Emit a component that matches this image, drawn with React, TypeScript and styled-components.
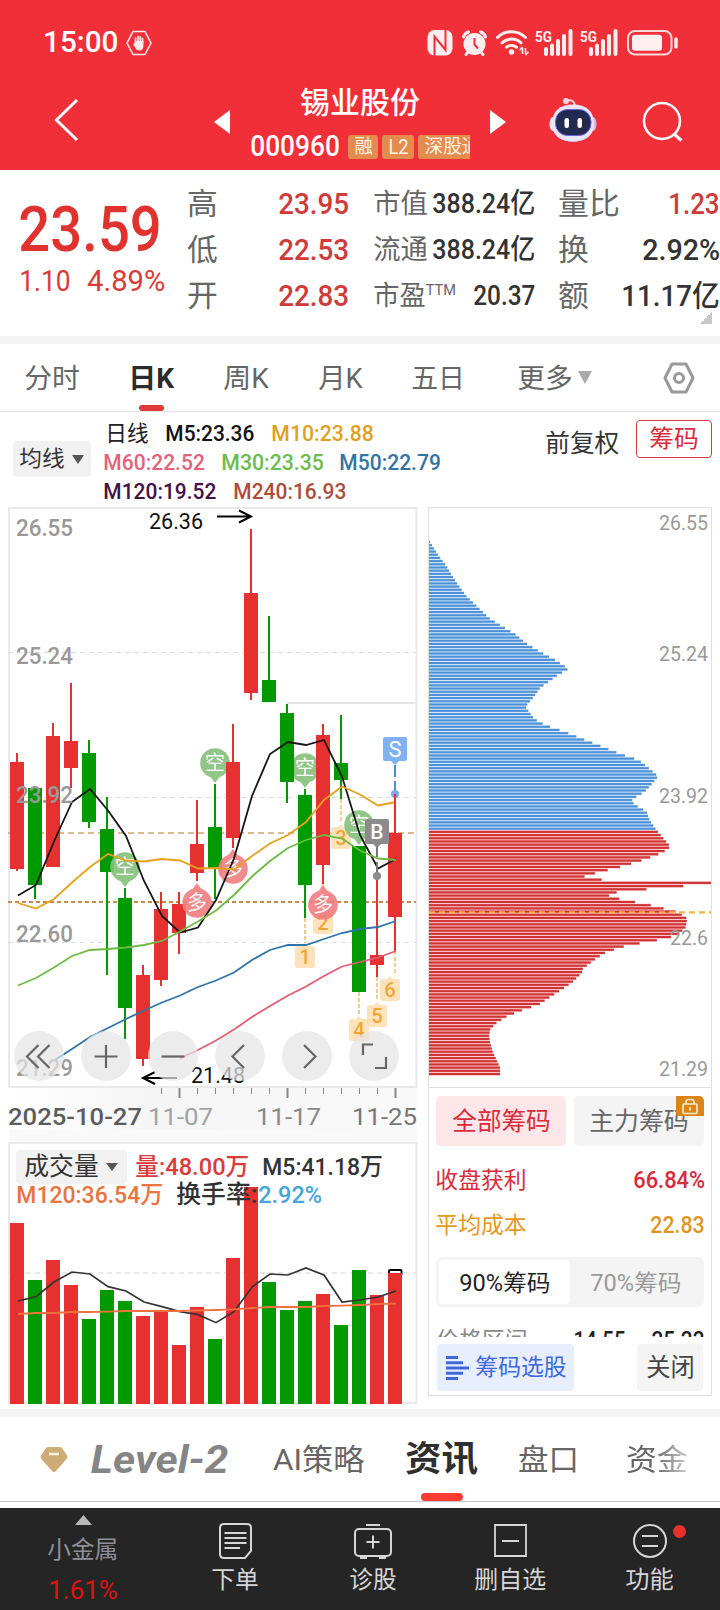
import React, { useLayoutEffect, useRef } from "react";
import styled, { createGlobalStyle } from "styled-components";

const FONT = 'Roboto, "Noto Sans CJK SC", sans-serif';

const Global = createGlobalStyle`
  * { box-sizing: border-box; }
  body { margin: 0; background: #fff; font-family: ${FONT}; color: #333; }
  svg { display: block; flex: none; }
`;

/* ---------- text that is condensed to a set width ---------- */

const FitBox = styled.span<{ $w: number; $ml?: number; $s: number; $c?: string; $b?: number; $i?: boolean }>`
  display: block;
  flex: none;
  width: ${(p) => p.$w}px;
  margin-left: ${(p) => p.$ml ?? 0}px;
  font-size: ${(p) => p.$s}px;
  line-height: ${(p) => Math.round(p.$s * 1.2)}px;
  font-weight: ${(p) => p.$b ?? 400};
  font-style: ${(p) => (p.$i ? "italic" : "normal")};
  color: ${(p) => p.$c ?? "inherit"};
  white-space: nowrap;
`;
const FitInner = styled.span`
  display: inline-block;
  white-space: pre;
  transform-origin: 0 50%;
`;

type FitProps = { w: number; s: number; ml?: number; c?: string; b?: number; i?: boolean; children: React.ReactNode };

function Fit({ w, s, ml, c, b, i, children }: FitProps) {
  const ref = useRef<HTMLSpanElement>(null);
  useLayoutEffect(() => {
    const el = ref.current;
    if (el) el.style.transform = `scaleX(${(w + s * 0.06) / el.offsetWidth}) translateX(${-s * 0.03}px)`;
  }, [w, s]);
  return (
    <FitBox $w={w} $s={s} $ml={ml} $c={c} $b={b} $i={i}>
      <FitInner ref={ref}>{children}</FitInner>
    </FitBox>
  );
}

/* ---------- page ---------- */

const Page = styled.div`
  width: 720px;
  height: 1610px;
  overflow: hidden;
  display: flex;
  flex-direction: column;
  background: #fff;
`;
const Band = styled.div`
  height: 8px;
  flex: none;
  background: #f4f4f4;
`;

/* ---------- header ---------- */

const Header = styled.header`
  height: 170px;
  flex: none;
  background: #f12f38;
  color: #fff;
`;
const StatusBar = styled.div`
  height: 84px;
  padding: 1px 41px 0 44px;
  display: flex;
  align-items: center;
  justify-content: space-between;
`;
const StatusLeft = styled.div`
  display: flex;
  align-items: center;
  gap: 8px;
`;
const NavBar = styled.div`
  height: 86px;
  display: flex;
`;
const NavCell = styled.div<{ $ml: number; $mt: number }>`
  margin: ${(p) => p.$mt}px 0 0 ${(p) => p.$ml}px;
  flex: none;
`;
const TitleBox = styled.div`
  width: 220px;
  margin-left: 20px;
  padding-top: 1px;
  overflow: hidden;
`;
const CodeRow = styled.div`
  display: flex;
  align-items: center;
  margin-top: 8px;
`;
const Tag = styled.span<{ $w: number; $ml: number }>`
  width: ${(p) => p.$w}px;
  height: 24px;
  flex: none;
  margin-left: ${(p) => p.$ml}px;
  padding-left: 7px;
  display: flex;
  align-items: center;
  background: #e38c4d;
  border-radius: 3px;
`;

/* ---------- quote ---------- */

const Quote = styled.section`
  height: 166px;
  flex: none;
  display: flex;
`;
const PriceCol = styled.div`
  width: 188px;
  padding: 22px 0 0 20px;
`;
const Row = styled.div`
  display: flex;
  align-items: center;
`;
const ChangeRow = styled(Row)`
  margin-top: -5px;
`;
const StatCol = styled.div<{ $w: number; $ml: number }>`
  width: ${(p) => p.$w}px;
  margin-left: ${(p) => p.$ml}px;
  flex: none;
  padding-top: 11px;
`;
const StatRow = styled.div`
  height: 46px;
  display: flex;
  align-items: center;
  justify-content: space-between;
  sup { font-size: 15px; vertical-align: 10px; line-height: 0; }
`;
const Corner = styled.i`
  display: block;
  margin: -7px 7px 0 auto;
  width: 12px;
  height: 12px;
  background: linear-gradient(135deg, transparent 50%, #c8c8c8 50%);
`;

/* ---------- period tabs ---------- */

const PeriodTabs = styled.nav`
  height: 68px;
  flex: none;
  border-bottom: 1px solid #e6e6e6;
  display: flex;
  color: #666;
`;
const PeriodTab = styled.div<{ $ml: number; $on?: boolean }>`
  margin-left: ${(p) => p.$ml}px;
  padding-top: 19px;
  display: flex;
  flex-direction: column;
  align-items: center;
  justify-content: space-between;
  &::after {
    content: "";
    width: 25px;
    height: 6px;
    border-radius: 3px;
    background: ${(p) => (p.$on ? "#dc3a3a" : "transparent")};
  }
`;
const TabGlyph = styled.div<{ $ml: number; $mt: number }>`
  margin: ${(p) => p.$mt}px 0 0 ${(p) => p.$ml}px;
`;

/* ---------- averages legend ---------- */

const Legend = styled.section`
  height: 95px;
  flex: none;
  display: flex;
`;
const Select = styled.div<{ $w: number; $h: number; $pl: number }>`
  width: ${(p) => p.$w}px;
  height: ${(p) => p.$h}px;
  padding-left: ${(p) => p.$pl}px;
  flex: none;
  display: flex;
  align-items: center;
  gap: 8px;
  background: #f1f1f1;
  border-radius: 4px;
  color: #333;
`;
const LegendSelect = styled.div`
  margin: 29px 13px 0;
`;
const LegendLines = styled.div`
  padding-top: 7px;
  width: 442px;
`;
const LegendLine = styled.div`
  height: 29px;
  display: flex;
  align-items: center;
`;
const LegendRight = styled.div`
  display: flex;
  align-items: flex-end;
  height: 38px;
  margin-top: 8px;
`;
const OutlineButton = styled.div`
  width: 76px;
  height: 38px;
  margin-left: 17px;
  border: 1px solid #d23d49;
  border-radius: 4px;
  display: flex;
  align-items: center;
  justify-content: center;
`;

/* ---------- charts ---------- */

const Charts = styled.section`
  height: 902px;
  flex: none;
  display: flex;
`;
const ChartCol = styled.div`
  width: 428px;
  flex: none;
`;
const Overlaid = styled.div`
  position: relative;
`;
const ChartButtons = styled.div`
  position: absolute;
  left: 14px;
  top: 524px;
  display: flex;
  gap: 17px;
`;
const RoundButton = styled.div`
  width: 50px;
  height: 50px;
  border-radius: 50%;
  background: rgba(229, 229, 229, 0.72);
`;
const VolumeHead = styled.div`
  position: absolute;
  left: 16px;
  top: 20px;
`;
const VolumeLine2 = styled.div`
  display: flex;
  align-items: center;
  margin-top: -4px;
`;

const ChipPanel = styled.aside`
  width: 284px;
  height: 889px;
  border: 1px solid #dfdfdf;
  display: flex;
  flex-direction: column;
`;
const ChipBody = styled.div`
  border-top: 1px solid #dfdfdf;
  padding: 8px 7px 0;
  flex: 1;
`;
const ChipTabs = styled.div`
  display: flex;
  gap: 8px;
`;
const ChipTab = styled.div<{ $on?: boolean }>`
  position: relative;
  width: 130px;
  height: 50px;
  padding-top: 1px;
  border-radius: 5px;
  display: flex;
  align-items: center;
  justify-content: center;
  background: ${(p) => (p.$on ? "#ffe7e9" : "#f4f4f4")};
  color: ${(p) => (p.$on ? "#d92b3c" : "#666")};
`;
const LockBadge = styled.div`
  position: absolute;
  top: 0;
  right: 0;
  width: 28px;
  height: 20px;
  background: #d98519;
  border-radius: 0 5px 0 3px;
`;
const ChipRow = styled.div<{ $mt: number }>`
  margin-top: ${(p) => p.$mt}px;
  height: 30px;
  display: flex;
  align-items: center;
  justify-content: space-between;
`;
const Segmented = styled.div`
  width: 268px;
  height: 50px;
  margin-top: 17px;
  padding: 3px;
  display: flex;
  background: #f4f4f4;
  border-radius: 6px;
`;
const Segment = styled.div<{ $on?: boolean }>`
  width: 131px;
  padding-top: 3px;
  border-radius: 4px;
  display: flex;
  align-items: center;
  justify-content: center;
  background: ${(p) => (p.$on ? "#fff" : "transparent")};
`;
const ClippedRow = styled.div`
  height: 10px;
  margin-top: 20px;
  overflow: hidden;
  display: flex;
  align-items: flex-start;
`;
const ChipActions = styled.div`
  display: flex;
  justify-content: space-between;
  margin: 7px 1px 0;
`;
const Action = styled.div<{ $w: number; $blue?: boolean }>`
  width: ${(p) => p.$w}px;
  height: 47px;
  border-radius: 4px;
  display: flex;
  align-items: center;
  justify-content: center;
  gap: 7px;
  background: ${(p) => (p.$blue ? "#e7eeff" : "#f4f4f4")};
`;

/* ---------- bottom ---------- */

const InfoTabs = styled.nav`
  height: 85px;
  flex: none;
  border-bottom: 1px solid #c8c8c8;
  display: flex;
`;
const InfoTab = styled.div<{ $ml: number; $on?: boolean; $fade?: boolean }>`
  margin-left: ${(p) => p.$ml}px;
  display: flex;
  flex-direction: column;
  align-items: center;
  ${(p) => p.$fade && "mask-image: linear-gradient(90deg, #000 45%, rgba(0,0,0,.35));"}
  & > :first-child { height: 76px; display: flex; align-items: center; padding-top: 10px; }
  &::after {
    content: "";
    width: 42px;
    height: 8px;
    border-radius: 4px;
    background: ${(p) => (p.$on ? "#fa3c32" : "transparent")};
  }
`;
const LabelBox = styled.div``;
const BottomBar = styled.footer`
  height: 102px;
  margin-top: 6px;
  flex: none;
  background: #252525;
  display: flex;
`;
const BottomItem = styled.div<{ $ml: number; $w: number; $pt: number }>`
  width: ${(p) => p.$w}px;
  margin-left: ${(p) => p.$ml}px;
  padding-top: ${(p) => p.$pt}px;
  flex: none;
  display: flex;
  flex-direction: column;
  align-items: center;
  color: #d6d6d6;
`;
const IconHolder = styled.div`
  height: 43px;
  position: relative;
`;
const RedDot = styled.i`
  position: absolute;
  left: 40px;
  top: 2px;
  width: 13px;
  height: 13px;
  border-radius: 50%;
  background: #e8302f;
`;
const IndexGap = styled.div<{ $h: number }>`
  height: ${(p) => p.$h}px;
`;

/* ---------- small drawings ---------- */

function Down({ w, h, c }: { w: number; h: number; c: string }) {
  return (
    <svg width={w} height={h}>
      <path d={`M0 0H${w}L${w / 2} ${h}Z`} fill={c} />
    </svg>
  );
}

const HandIcon = () => (
  <svg width="26" height="26" viewBox="0 0 26 26">
    <path d="M7 1.5h12L25 13l-6 11.5H7L1 13z" fill="none" stroke="#ffe9ea" strokeWidth="1.6" strokeLinejoin="round" />
    <path d="M9.6 13V8M12 12V6.4M14.3 12V6.8M16.5 13V8.6" stroke="#ffe9ea" strokeWidth="1.7" strokeLinecap="round" />
    <path d="M8.8 11h8.6v5c0 3-1.6 4.6-4 4.6-2.2 0-3.3-1.2-4.3-3l-2-3.6 1.2-.6z" fill="#ffe9ea" />
  </svg>
);

const Signal = ({ x }: { x: number }) => (
  <g transform={`translate(${x} 0)`}>
    <text x="0" y="12.5" fontSize="15.5" fontWeight="700" textLength="17" lengthAdjust="spacingAndGlyphs">5G</text>
    <path d="M11 20v5M17 16.5v8.500M23 12v13M29 7v18M35.500 2v23" stroke="#ffeeef" strokeWidth="4" strokeLinecap="round" />
  </g>
);

const StatusIcons = () => (
  <svg width="252" height="28" viewBox="0 0 252 28" fill="#ffeeef" fontFamily={FONT}>
    <rect x="0.500" y="1" width="25" height="25.500" rx="7" />
    <path d="M7.500 27V7.500L18.500 21V0" fill="none" stroke="#f12f38" strokeWidth="2" />
    <path d="M10.500 3.500L15.500 9.500M10.500 18L15.500 24" stroke="#ffeeef" strokeWidth="2" />
    <circle cx="47.500" cy="15" r="11" />
    <path d="M36.500 8a7 7 0 0 1 5-5M58.500 8a7 7 0 0 0-5-5M39 25.500l3-3.500M56 25.500l-3-3.500" stroke="#ffeeef" strokeWidth="3" strokeLinecap="round" fill="none" />
    <path d="M47.500 9v6.500l3.500 4" stroke="#f12f38" strokeWidth="2" fill="none" />
    <path d="M70.500 8.500a20 20 0 0 1 28 0M75 13.800a14 14 0 0 1 19 0M79.500 18.200a8 8 0 0 1 10 0" stroke="#ffeeef" strokeWidth="3" fill="none" strokeLinecap="round" />
    <circle cx="84.500" cy="23" r="2.800" />
    <path d="M95.500 19v6M95.500 18l-3 3.200M98.500 19v6M98.500 26l3-3.200" stroke="#ffeeef" strokeWidth="1.600" />
    <Signal x={108} />
    <Signal x={153} />
    <rect x="201" y="2" width="43.500" height="23.500" rx="7" fill="none" stroke="#ffd9db" strokeWidth="2" />
    <rect x="205" y="5.800" width="30" height="16" rx="3" />
    <path d="M249 10v8" stroke="#ffeeef" strokeWidth="3.500" strokeLinecap="round" />
  </svg>
);

const Robot = () => (
  <svg width="48" height="46" viewBox="0 0 48 46">
    <path d="M18 4c4-2 8 0 8 6" stroke="#ffd2dc" strokeWidth="2" fill="none" />
    <circle cx="17" cy="4" r="3" fill="#ffd6dd" />
    <ellipse cx="4" cy="27" rx="3.500" ry="7" fill="#e9e4fb" />
    <ellipse cx="44" cy="27" rx="3.500" ry="7" fill="#c9bdf3" />
    <path d="M3 27C3 14 11 7.500 24 7.500S45 14 45 27C45 39 36 44.500 24 44.500S3 39 3 27Z" fill="#eae6fa" />
    <path d="M8 38c8 8 24 8 32 0-6 9-26 9-32 0z" fill="#cfc6f2" />
    <rect x="6.500" y="12.500" width="35.500" height="26" rx="12" fill="#232a52" stroke="#6f63d8" strokeWidth="1" />
    <rect x="15.500" y="21" width="4.500" height="10" rx="2.200" fill="#fff" />
    <rect x="28.500" y="21" width="4.500" height="10" rx="2.200" fill="#fff" />
  </svg>
);

/* ---------- candlestick data ---------- */

const RED = "#e73030";
const GREEN = "#009a00";
const PITCH = 18;

// [rising, high, top, bottom, low] in chart coordinates
const candles: [number, number, number, number, number][] = [
  [1, 753, 762, 869, 871], [0, 788, 788, 885, 899], [1, 723, 736, 867, 867], [1, 683, 741, 768, 788],
  [0, 740, 753, 822, 828], [0, 797, 829, 872, 975], [0, 888, 898, 1008, 1039], [1, 965, 975, 1059, 1066],
  [1, 892, 909, 980, 986], [1, 892, 904, 933, 954], [1, 800, 844, 873, 881], [0, 784, 827, 869, 899],
  [1, 724, 762, 838, 848], [1, 529, 593, 693, 700], [0, 616, 680, 702, 702], [0, 704, 713, 782, 803],
  [0, 789, 795, 885, 918], [1, 724, 735, 865, 884], [0, 715, 763, 780, 799], [0, 846, 846, 992, 992],
  [1, 877, 955, 965, 977], [1, 794, 833, 917, 951],
];

const averages: { c: string; from: number; y: number[] }[] = [
  { c: "#2f74a6", from: 2, y: [1060.5, 1049, 1037, 1028, 1019, 1010.5, 1002.5, 995.5, 987, 980.5, 972.5, 960, 950, 945, 945, 939, 933, 929, 927, 921] },
  { c: "#e25d72", from: 9, y: [1058.5, 1050, 1040.5, 1029.5, 1017, 1006, 995.5, 986.5, 976, 966.5, 962, 957.5, 951] },
  { c: "#151515", from: 0, y: [895.5, 885, 841.5, 802, 789, 810.5, 836, 881, 916, 932.5, 927.5, 900, 858.5, 796, 754, 742, 745, 740, 776.5, 835, 868.5, 859] },
  { c: "#e5a01e", from: 0, y: [903, 908.5, 899, 882.5, 867, 854, 860.5, 861.5, 859, 860.5, 868.5, 868, 869.5, 856, 843.5, 835, 822, 800, 786.5, 794.5, 805.5, 802] },
  { c: "#6dbb45", from: 0, y: [985.5, 978, 967.5, 956, 950, 949, 947.5, 945, 941, 931.5, 921.5, 910.5, 895, 876.5, 861, 848, 840, 835, 838.5, 850.5, 858.5, 860] },
];

const line = (ys: number[], from = 0) => ys.map((y, i) => `${18 + PITCH * (i + from)},${y}`).join(" ");

function AxisText({ x, y, w, s, c = "#999", b = 400, children }: { x: number; y: number; w: number; s: number; c?: string; b?: number; children: string }) {
  return (
    <text x={x} y={y} fontSize={s} fill={c} fontWeight={b} textLength={w} lengthAdjust="spacingAndGlyphs">{children}</text>
  );
}

function Pin({ x, y, down, label }: { x: number; y: number; down?: boolean; label: string }) {
  const d = down ? `M-6 12L0 20L6 12Z` : `M-6 -12L0 -20L6 -12Z`;
  return (
    <g transform={`translate(${x} ${y})`} opacity="0.9">
      <path d={d} fill={down ? "#84c07b" : "#f07e80"} />
      <circle r="14.800" fill={down ? "#84c07b" : "#f07e80"} />
      <text y="7" fontSize="20" fill="#fff" textAnchor="middle">{label}</text>
    </g>
  );
}

function CountBox({ x, bottom, n }: { x: number; bottom: number; n: number }) {
  return (
    <g opacity="0.9">
      <path d={`M${x + 6} ${bottom - 21}l4-4l4 4z`} fill="#fddfb3" />
      <rect x={x} y={bottom - 22} width="20" height="22" rx="3" fill="#fddfb3" />
      <text x={x + 10} y={bottom - 4} fontSize="20" fontWeight="500" fill="#f09c22" textAnchor="middle">{n}</text>
    </g>
  );
}

function CandleChart() {
  return (
    <svg width="428" height="623" viewBox="0 507 428 623" fontFamily={FONT}>
      <defs>
        <linearGradient id="axisbg" x1="0" x2="1">
          <stop offset="0" stopColor="#fff" />
          <stop offset="0.35" stopColor="#f5f5f5" />
          <stop offset="1" stopColor="#f9f9f9" />
        </linearGradient>
      </defs>
      <rect x="9" y="1088" width="408" height="42" fill="url(#axisbg)" />
      <rect x="9" y="508" width="407.500" height="579" fill="#fff" stroke="#e9e9e9" strokeWidth="2" />
      {[652.5, 797.5, 942.5].map((y) => (
        <path key={y} d={`M8 ${y}H416`} stroke="#dedede" strokeWidth="1" strokeDasharray="5 4" />
      ))}
      <path d="M287 703H416" stroke="#e6e6e6" strokeWidth="2" />
      <path d="M8 833H416" stroke="#cfa46a" strokeWidth="1.500" strokeDasharray="6 4" />
      <path d="M8 902H416" stroke="#c98646" strokeWidth="2" strokeDasharray="4 3" />
      <Pin x={215} y={763} down label="空" />
      <Pin x={305} y={768} down label="空" />
      {candles.map(([up, hi, top, bot, lo], i) => (
        <g key={i} fill={up ? RED : GREEN}>
          <rect x={16 + PITCH * i} y={hi} width="2" height={lo - hi} />
          <rect x={10 + PITCH * i} y={top} width="14" height={bot - top} />
        </g>
      ))}
      <path d="M305 918V943M323 884V912M341 799V822M359 992V1014M377 977V1001M395 951V975" stroke="#f6c98c" strokeWidth="2" strokeDasharray="4 2" />
      <CountBox x={295} bottom={968} n={1} />
      <CountBox x={313} bottom={934} n={2} />
      <CountBox x={331} bottom={849} n={3} />
      <CountBox x={349} bottom={1041} n={4} />
      <CountBox x={367} bottom={1027} n={5} />
      <CountBox x={380} bottom={1001} n={6} />
      <Pin x={125} y={867} down label="空" />
      <Pin x={359} y={825} down label="空" />
      <Pin x={197} y={903} label="多" />
      <Pin x={233} y={869} label="多" />
      <Pin x={323} y={905} label="多" />
      {averages.map((a) => (
        <polyline key={a.c} points={line(a.y, a.from)} fill="none" stroke={a.c} strokeWidth="1.800" />
      ))}
      <path d="M395 765V777M395 781V794" stroke="#4a8de0" strokeWidth="2" />
      <circle cx="395" cy="794" r="4" fill="#7aa9ee" />
      <path d="M395 794V833" stroke={RED} strokeWidth="2" />
      <path d="M385 737h20a2 2 0 0 1 2 2v20a2 2 0 0 1-2 2h-6l-4 4-4-4h-6a2 2 0 0 1-2-2v-20a2 2 0 0 1 2-2z" fill="#80b1f0" />
      <text x="395" y="757" fontSize="22" fill="#fff" textAnchor="middle">S</text>
      <path d="M377 846V857M377 862V873" stroke="#777" strokeWidth="2" />
      <circle cx="377" cy="876" r="4" fill="#8a8a8a" />
      <path d="M367 819h20a2 2 0 0 1 2 2v21a2 2 0 0 1-2 2h-6l-4 4-4-4h-6a2 2 0 0 1-2-2v-21a2 2 0 0 1 2-2z" fill="#8b8b8b" />
      <text x="377" y="839" fontSize="21" fontWeight="500" fill="#fff" textAnchor="middle">B</text>

      <AxisText x={16} y={536} w={57} s={24.5} b={500}>26.55</AxisText>
      <AxisText x={16} y={664} w={57} s={24.5} b={500}>25.24</AxisText>
      <AxisText x={16} y={803} w={57} s={24.5} b={500}>23.92</AxisText>
      <AxisText x={16} y={942} w={57} s={24.5} b={500}>22.60</AxisText>
      <AxisText x={16} y={1076} w={57} s={24.5} b={500}>21.29</AxisText>
      <AxisText x={149} y={529} w={54} s={22} c="#111">26.36</AxisText>
      <path d="M217 516.500H251M239 510.500L251 516.500L239 522.500" stroke="#000" strokeWidth="2" fill="none" />
      <AxisText x={191} y={1082.5} w={54} s={22} c="#111">21.48</AxisText>
      <path d="M177 1078H143M155 1072L143 1078L155 1084" stroke="#000" strokeWidth="2" fill="none" />

      {Array.from({ length: 14 }, (_, k) => k + 8).map((i) => {
        const big = i === 9 || i === 15 || i === 21;
        return <path key={i} d={`M${17.5 + PITCH * i} 1088V${big ? 1098 : 1094}`} stroke="#888" strokeWidth={big ? 2 : 1} />;
      })}
      <AxisText x={148} y={1124.5} w={65} s={24} c="#a2a2a2">11-07</AxisText>
      <AxisText x={256} y={1124.5} w={65} s={24} c="#888">11-17</AxisText>
      <AxisText x={352} y={1124.5} w={65} s={24} c="#777">11-25</AxisText>
      <AxisText x={8} y={1124.5} w={134} s={24} c="#5c5c5c" b={500}>2025-10-27</AxisText>
    </svg>
  );
}

const buttonGlyphs = [
  "M24.500 14L13 25.500L24.500 37M35.500 14L24 25.500L35.500 37",
  "M25 14V37M13.500 25.500H36.500",
  "M13.500 25.500H36.500",
  "M29 14L17.500 25.500L29 37",
  "M22 14L33.500 25.500L22 37",
  "M14 24V13.500H24M37 26V37H26",
];

/* ---------- chip distribution ---------- */

// [y, bar end x] outline of the distribution
const outline: [number, number][] = [
  [542, 430], [555, 438], [567, 447], [580, 454.7], [595.7, 466], [608.3, 479], [618, 489], [627.3, 503.7], [633.7, 514.7],
  [643.3, 526], [652.7, 541.7], [659.3, 554], [668.7, 568.7], [675, 558], [681.3, 549.3], [687.7, 540.3], [697, 533.7],
  [706.7, 525.3], [719, 534.3], [725.3, 545.7], [731.7, 564.7], [741.3, 588.7], [747.7, 605], [754, 620.7], [760.3, 639],
  [766.7, 647], [776.3, 658.3], [785.7, 650.3], [792, 644.3], [798.3, 634], [801.3, 631], [807.7, 639.3], [811, 646],
  [820.7, 650], [830, 656.3], [845.7, 669.7], [849, 668.7], [855.3, 656], [861.7, 638.3], [868, 616.3], [874.3, 591],
  [877.7, 581], [880.7, 612], [883.8, 711], [887, 671.7], [890, 638], [893.3, 609], [896.7, 609], [899.7, 623.7], [906, 654.7],
  [912.3, 678.3], [918.7, 687.3], [928.3, 685.3], [934.7, 677], [937.7, 669.3], [941, 653], [944, 636.3], [947, 621.7],
  [953.3, 604], [960, 594], [969.3, 582.3], [972.7, 582], [982, 572.7], [988.7, 563], [998, 548.7], [1004.3, 539.3],
  [1010.7, 520.7], [1017, 505.7], [1023.3, 496], [1029.7, 490], [1036, 489], [1042.3, 490], [1052, 492.7], [1058, 495.7],
  [1067.7, 500], [1076, 500],
];

function barEnd(y: number) {
  for (let i = 1; i < outline.length; i++) {
    if (y <= outline[i][0]) {
      const [y0, x0] = outline[i - 1];
      const [y1, x1] = outline[i];
      return x0 + ((x1 - x0) * (y - y0)) / (y1 - y0);
    }
  }
  return 500;
}

const STEP = 3.1858;
const chipBars = Array.from({ length: 168 }, (_, i) => {
  const y = 542 + i * STEP;
  return { y, w: (i === 107 ? 711 : barEnd(Math.min(y, 1075))) - 429, blue: i < 91 };
});

function ChipChart() {
  return (
    <svg width="282" height="579" viewBox="429 508 282 579" fontFamily={FONT}>
      {chipBars.map((b, i) => (
        <g key={i}>
          <rect x="429" y={b.y - 1.5} width={b.w} height="3" fill={b.blue ? "#c2e0fa" : "#fbb5b3"} />
          <rect x="429" y={b.y - 1.05} width={b.w} height="2.100" fill={b.blue ? "#4f90d6" : "#cf3335"} />
        </g>
      ))}
      <path d="M429 912.300H711" stroke="#f3b44a" strokeWidth="2.200" strokeDasharray="6 4" />
      <AxisText x={659} y={530} w={49} s={20.5}>26.55</AxisText>
      <AxisText x={659} y={661} w={49} s={20.5}>25.24</AxisText>
      <AxisText x={659} y={802.7} w={49} s={20.5}>23.92</AxisText>
      <AxisText x={670} y={945} w={38} s={20.5}>22.6</AxisText>
      <AxisText x={659} y={1075.7} w={49} s={20.5}>21.29</AxisText>
    </svg>
  );
}

/* ---------- volume ---------- */

const volumeTops = [1223, 1280, 1260, 1285, 1319, 1290, 1301, 1316, 1312, 1345, 1307, 1339, 1258, 1187, 1282, 1310, 1301, 1294, 1325, 1270, 1295, 1273];
const volumeM5 = [513, 500, 456, 426, 432, 470, 483, 516, 530, 545, 554, 578, 545, 471, 432, 435, 414, 435, 516, 510, 501, 483].map((v) => 1130 + v / 3);
const volumeM120 = [552, 549, 549, 546, 546, 545, 543, 543, 543, 543, 541, 540, 538, 534, 531, 531, 531, 528, 527, 525, 522, 521].map((v) => 1130 + v / 3);

function VolumeChart() {
  return (
    <svg width="428" height="279" viewBox="0 1130 428 279">
      <rect x="9" y="1130" width="408" height="12" fill="#f9f9f9" />
      <rect x="9" y="1143" width="407.500" height="260" fill="#fff" stroke="#e9e9e9" strokeWidth="2" />
      <path d="M8 1273H416" stroke="#e2e2e2" strokeWidth="1.500" strokeDasharray="5 4" />
      <rect x="389" y="1270" width="12.500" height="5" rx="1" fill="#fff" stroke="#000" strokeWidth="2" />
      {volumeTops.map((y, i) => (
        <rect key={i} x={10 + PITCH * i} y={y} width="14" height={1404 - y} fill={candles[i][0] ? RED : GREEN} />
      ))}
      <polyline points={line(volumeM5)} fill="none" stroke="#333" strokeWidth="1.700" />
      <polyline points={line(volumeM120)} fill="none" stroke="#f07040" strokeWidth="1.800" />
    </svg>
  );
}

/* ---------- app ---------- */

export default function App() {
  return (
    <Page>
      <Global />
      <Header>
        <StatusBar>
          <StatusLeft>
            <Fit w={74} s={29} b={500}>15:00</Fit>
            <HandIcon />
          </StatusLeft>
          <StatusIcons />
        </StatusBar>
        <NavBar>
          <NavCell $ml={54} $mt={14}>
            <svg width="26" height="44"><path d="M23 2L2.500 22L23 42" fill="none" stroke="#fff" strokeWidth="3" /></svg>
          </NavCell>
          <NavCell $ml={134} $mt={26}>
            <svg width="16" height="24"><path d="M16 0V24L0 12Z" fill="#fff" /></svg>
          </NavCell>
          <TitleBox>
            <Fit w={118} s={30} ml={51} b={500}>锡业股份</Fit>
            <CodeRow>
              <Fit w={88} s={29} ml={1} b={500}>000960</Fit>
              <Tag $w={30} $ml={9}><Fit w={17} s={19} c="#fff3e6">融</Fit></Tag>
              <Tag $w={32} $ml={4}><Fit w={19} s={20} c="#fff3e6">L2</Fit></Tag>
              <Tag $w={80} $ml={4}><Fit w={55} s={19} c="#fff3e6">深股通</Fit></Tag>
            </CodeRow>
          </TitleBox>
          <NavCell $ml={20} $mt={26}>
            <svg width="16" height="24"><path d="M0 0V24L16 12Z" fill="#fff" /></svg>
          </NavCell>
          <NavCell $ml={43} $mt={13}><Robot /></NavCell>
          <NavCell $ml={45} $mt={17}>
            <svg width="42" height="42">
              <circle cx="20" cy="20" r="18" fill="none" stroke="#fff" strokeWidth="2.500" />
              <path d="M32 33L39.500 39.500" stroke="#fff" strokeWidth="3" />
            </svg>
          </NavCell>
        </NavBar>
      </Header>

      <Quote>
        <PriceCol>
          <Fit w={140} s={63} c="#e0322f" b={500}>23.59</Fit>
          <ChangeRow>
            <Fit w={50} s={30} c="#dc3838">1.10</Fit>
            <Fit w={76} s={30} ml={18} c="#dc3838">4.89%</Fit>
          </ChangeRow>
        </PriceCol>
        <StatCol $w={160} $ml={0}>
          {[["高", "23.95"], ["低", "22.53"], ["开", "22.83"]].map(([k, v]) => (
            <StatRow key={k}>
              <Fit w={29} s={30} c="#666">{k}</Fit>
              <Fit w={69} s={29.5} b={500} c="#cf3a3a">{v}</Fit>
            </StatRow>
          ))}
        </StatCol>
        <StatCol $w={160} $ml={26}>
          <StatRow><Fit w={53} s={27} c="#666">市值</Fit><Fit w={101} s={28} b={500}>388.24亿</Fit></StatRow>
          <StatRow><Fit w={53} s={27} c="#666">流通</Fit><Fit w={101} s={28} b={500}>388.24亿</Fit></StatRow>
          <StatRow><Fit w={81} s={27} c="#666">市盈<sup>TTM</sup></Fit><Fit w={60} s={28} b={500}>20.37</Fit></StatRow>
        </StatCol>
        <StatCol $w={160} $ml={25}>
          <StatRow><Fit w={60} s={30} c="#666">量比</Fit><Fit w={50} s={29.5} b={500} c="#cf3a3a">1.23</Fit></StatRow>
          <StatRow><Fit w={29} s={30} c="#666">换</Fit><Fit w={76} s={29.5} b={500}>2.92%</Fit></StatRow>
          <StatRow><Fit w={29} s={30} c="#666">额</Fit><Fit w={97} s={29.5} b={500}>11.17亿</Fit></StatRow>
          <Corner />
        </StatCol>
      </Quote>
      <Band />

      <PeriodTabs>
        <PeriodTab $ml={25}><Fit w={54} s={27}>分时</Fit></PeriodTab>
        <PeriodTab $ml={50} $on><Fit w={44} s={27} b={700} c="#2b2b2b">日K</Fit></PeriodTab>
        <PeriodTab $ml={51}><Fit w={44} s={27}>周K</Fit></PeriodTab>
        <PeriodTab $ml={51}><Fit w={43} s={27}>月K</Fit></PeriodTab>
        <PeriodTab $ml={50}><Fit w={52} s={27}>五日</Fit></PeriodTab>
        <PeriodTab $ml={54}><Fit w={54} s={27}>更多</Fit></PeriodTab>
        <TabGlyph $ml={6} $mt={27}><Down w={14} h={13} c="#aaa" /></TabGlyph>
        <TabGlyph $ml={71} $mt={18}>
          <svg width="32" height="32">
            <path d="M9 2H23L30 16L23 30H9L2 16Z" fill="none" stroke="#999" strokeWidth="3" strokeLinejoin="round" />
            <circle cx="16" cy="16" r="4.500" fill="none" stroke="#999" strokeWidth="3" />
          </svg>
        </TabGlyph>
      </PeriodTabs>

      <Legend>
        <LegendSelect>
          <Select $w={78} $h={36} $pl={7}>
            <Fit w={44} s={22}>均线</Fit>
            <Down w={12} h={9} c="#555" />
          </Select>
        </LegendSelect>
        <LegendLines>
          <LegendLine>
            <Fit w={42} s={22} ml={2} c="#222">日线</Fit>
            <Fit w={88} s={22} ml={18} b={500} c="#111">M5:23.36</Fit>
            <Fit w={101} s={22} ml={18} b={500} c="#dfa026">M10:23.88</Fit>
          </LegendLine>
          <LegendLine>
            <Fit w={100} s={22} b={500} c="#e2637a">M60:22.52</Fit>
            <Fit w={101} s={22} ml={18} b={500} c="#6cbb4c">M30:23.35</Fit>
            <Fit w={100} s={22} ml={17} b={500} c="#3474a2">M50:22.79</Fit>
          </LegendLine>
          <LegendLine>
            <Fit w={112} s={22} b={500} c="#441148">M120:19.52</Fit>
            <Fit w={112} s={22} ml={18} b={500} c="#ad4e3c">M240:16.93</Fit>
          </LegendLine>
        </LegendLines>
        <LegendRight>
          <Fit w={73} s={24.5}>前复权</Fit>
          <OutlineButton><Fit w={48} s={24} c="#d92b3c">筹码</Fit></OutlineButton>
        </LegendRight>
      </Legend>

      <Charts>
        <ChartCol>
          <Overlaid>
            <CandleChart />
            <ChartButtons>
              {buttonGlyphs.map((d) => (
                <RoundButton key={d}>
                  <svg width="50" height="50"><path d={d} fill="none" stroke="#666" strokeWidth="2.200" /></svg>
                </RoundButton>
              ))}
            </ChartButtons>
          </Overlaid>
          <Overlaid>
            <VolumeChart />
            <VolumeHead>
              <Row>
                <Select $w={111} $h={34} $pl={9}>
                  <Fit w={73} s={25}>成交量</Fit>
                  <Down w={12} h={8} c="#555" />
                </Select>
                <Fit w={113} s={24} ml={9} b={500} c="#d93a3a">量:48.00万</Fit>
                <Fit w={119} s={24} ml={14} b={500} c="#333">M5:41.18万</Fit>
              </Row>
              <VolumeLine2>
                <Fit w={145} s={24} ml={1} b={500} c="#ea7440">M120:36.54万</Fit>
                <Fit w={80} s={25} ml={15} b={500} c="#333">换手率:</Fit>
                <Fit w={62} s={24} ml={2} b={500} c="#45a5dc">2.92%</Fit>
              </VolumeLine2>
            </VolumeHead>
          </Overlaid>
        </ChartCol>

        <ChipPanel>
          <ChipChart />
          <ChipBody>
            <ChipTabs>
              <ChipTab $on><Fit w={97} s={24.5}>全部筹码</Fit></ChipTab>
              <ChipTab>
                <Fit w={98} s={24.5}>主力筹码</Fit>
                <LockBadge>
                  <svg width="28" height="20" fill="none" stroke="#ffe9c4" strokeWidth="1.600">
                    <rect x="7" y="8" width="14" height="9.500" rx="1" />
                    <path d="M10 8V6Q10 3.500 12.500 3.500H15.500Q18 3.500 18 6V8M14 11v3.500" />
                  </svg>
                </LockBadge>
              </ChipTab>
            </ChipTabs>
            <ChipRow $mt={19}>
              <Fit w={90} s={22.5} c="#d92b3c">收盘获利</Fit>
              <Fit w={70} s={23.5} b={500} c="#d92b3c">66.84%</Fit>
            </ChipRow>
            <ChipRow $mt={15}>
              <Fit w={90} s={22.5} c="#e7981c">平均成本</Fit>
              <Fit w={53} s={23.5} b={500} c="#e0951f">22.83</Fit>
            </ChipRow>
            <Segmented>
              <Segment $on><Fit w={90} s={23} c="#222">90%筹码</Fit></Segment>
              <Segment><Fit w={90} s={23} c="#999">70%筹码</Fit></Segment>
            </Segmented>
            <ClippedRow>
              <Fit w={90} s={22.5} ml={1} c="#888">价格区间</Fit>
              <Fit w={51} s={23} ml={47} b={500} c="#222">14.55</Fit>
              <Fit w={52} s={23} ml={27} b={500} c="#222">25.22</Fit>
            </ClippedRow>
            <ChipActions>
              <Action $w={137} $blue>
                <svg width="23" height="24" stroke="#3f68dc" strokeWidth="3">
                  <path d="M0 1.500H12M0 6.700H17M0 12H23M0 17.300H17M0 22.500H12" />
                </svg>
                <Fit w={90} s={23} c="#3f68dc">筹码选股</Fit>
              </Action>
              <Action $w={66}><Fit w={47} s={24.5} c="#444">关闭</Fit></Action>
            </ChipActions>
          </ChipBody>
        </ChipPanel>
      </Charts>
      <Band />

      <InfoTabs>
        <InfoTab $ml={33}>
          <LabelBox>
            <svg width="28" height="34" viewBox="0 0 28 34">
              <path d="M6 5Q7 4 8.500 4H19.500Q21 4 22 5L27 12.500Q28 14 27 15.500L15.500 28.500Q14 30 12.500 28.500L1 15.500Q0 14 1 12.500Z" fill="#cfab76" />
              <path d="M9 11H19" stroke="#fff3dc" strokeWidth="2.500" />
            </svg>
          </LabelBox>
        </InfoTab>
        <InfoTab $ml={17}><Fit w={135} s={38} b={700} i c="#858585">Level-2</Fit></InfoTab>
        <InfoTab $ml={47}><Fit w={90} s={30} c="#666">AI策略</Fit></InfoTab>
        <InfoTab $ml={42} $on><Fit w={71} s={35} b={700} c="#2f2f2f">资讯</Fit></InfoTab>
        <InfoTab $ml={42}><Fit w={59} s={30} c="#666">盘口</Fit></InfoTab>
        <InfoTab $ml={49} $fade><Fit w={60} s={30} c="#666">资金</Fit></InfoTab>
      </InfoTabs>

      <BottomBar>
        <BottomItem $ml={48} $w={70} $pt={7}>
          <svg width="17" height="10"><path d="M0 10H17L8.500 0Z" fill="#b9b9b9" /></svg>
          <IndexGap $h={11} />
          <Fit w={70} s={23.5} c="#8f8f97">小金属</Fit>
          <IndexGap $h={12} />
          <Fit w={68} s={25} c="#dd1414">1.61%</Fit>
        </BottomItem>
        <BottomItem $ml={94} $w={46} $pt={15}>
          <IconHolder>
            <svg width="33" height="36" fill="none" stroke="#d6d6d6" strokeWidth="2">
              <path d="M5 1H28Q32 1 32 5V28L26 35H5Q1 35 1 31V5Q1 1 5 1Z" />
              <path d="M5.500 10H27.500M5.500 15H27.500M5.500 20H27.500M5.500 25H21" />
            </svg>
          </IconHolder>
          <Fit w={46} s={23.5}>下单</Fit>
        </BottomItem>
        <BottomItem $ml={92} $w={46} $pt={15}>
          <IconHolder>
            <svg width="38" height="36" fill="none" stroke="#d6d6d6" strokeWidth="2">
              <rect x="1" y="6" width="36" height="27" rx="4" />
              <path d="M12 2H26M12.500 19H25.500M19 12.500V25.500M6 35H13M25 35H32" />
            </svg>
          </IconHolder>
          <Fit w={46} s={23.5}>诊股</Fit>
        </BottomItem>
        <BottomItem $ml={79} $w={71} $pt={15}>
          <IconHolder>
            <svg width="33" height="36" fill="none" stroke="#d6d6d6" strokeWidth="1.800">
              <path d="M1 2H32V33H1ZM8 18H25" />
            </svg>
          </IconHolder>
          <Fit w={71} s={23.5}>删自选</Fit>
        </BottomItem>
        <BottomItem $ml={80} $w={47} $pt={15}>
          <IconHolder>
            <svg width="34" height="36" fill="none" stroke="#d6d6d6" strokeWidth="2">
              <circle cx="17" cy="18" r="16" />
              <path d="M9 13H25M9 23H25" />
            </svg>
            <RedDot />
          </IconHolder>
          <Fit w={47} s={23.5}>功能</Fit>
        </BottomItem>
      </BottomBar>
    </Page>
  );
}
